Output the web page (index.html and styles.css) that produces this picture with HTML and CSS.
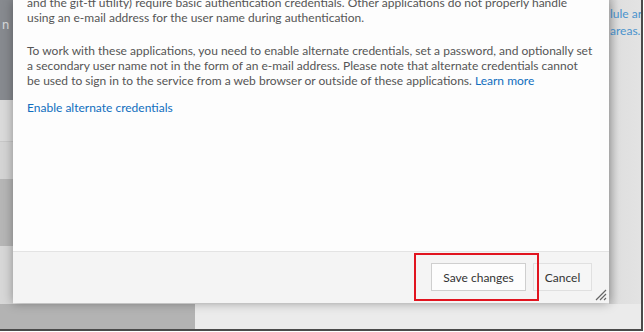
FILE: index.html
```html
<!DOCTYPE html>
<html lang="en">
<head>
    <meta charset="UTF-8">
    <title>Alternate credentials</title>
    <link rel="stylesheet" href="styles.css">
</head>
<body>
    <div class="frame">
        <div class="backdrop">
            <div class="side-left">
                <div class="seg seg-dark"><span>n</span></div>
                <div class="seg seg-light"></div>
                <div class="seg seg-light2"></div>
                <div class="seg seg-mid"></div>
                <div class="seg seg-light3"></div>
            </div>
            <div class="middle"></div>
            <div class="side-right">
                <p>lule ar</p>
                <p>areas.</p>
            </div>
        </div>
        <div class="bottom-band">
            <div class="band-dark"></div>
            <div class="band-light"></div>
        </div>

        <div class="dialog">
            <div class="dialog-body">
                <p class="first">and the git-tf utility) require basic authentication credentials. Other applications do not properly handle<br>
                using an e-mail address for the user name during authentication.</p>
                <p>To work with these applications, you need to enable alternate credentials, set a password, and optionally set<br>
                a secondary user name not in the form of an e-mail address. Please note that alternate credentials cannot<br>
                be used to sign in to the service from a web browser or outside of these applications. <a href="#">Learn more</a></p>
                <p class="enable"><a href="#">Enable alternate credentials</a></p>
            </div>
            <div class="dialog-footer">
                <button class="btn btn-primary">Save changes</button>
                <button class="btn btn-cancel">Cancel</button>
                <svg class="grip" width="12" height="12" viewBox="0 0 12 12">
                    <path d="M1 11 L11 1 M5 11 L11 5 M9 11 L11 9" stroke="#666" stroke-width="1.2" fill="none"/>
                </svg>
            </div>
        </div>

        <div class="highlight"></div>
    </div>
</body>
</html>
```

FILE: styles.css
```css
html, body {
    margin: 0;
    padding: 0;
    background: #fff;
}
body {
    font-family: Lato, 'Open Sans', sans-serif;
    width: 644px;
    height: 332px;
    overflow: hidden;
}
.frame {
    position: relative;
    width: 641px;
    height: 329px;
    border-right: 2px solid #4a4a4a;
    border-bottom: 2px solid #4a4a4a;
    overflow: hidden;
    background: #e9e9e9;
    display: flex;
    flex-direction: column;
}
.backdrop {
    display: flex;
    height: 304px;
}
.side-left {
    width: 13px;
    display: flex;
    flex-direction: column;
}
.seg {
    overflow: hidden;
}
.seg-dark {
    height: 100px;
    background: #878a8f;
    color: #d9dadc;
    font-size: 13px;
    padding: 16px 0 0 2px;
    box-sizing: border-box;
}
.seg-light {
    height: 41px;
    background: #dadada;
    border-bottom: 1px solid #c8c8c8;
}
.seg-light2 {
    height: 37px;
    background: #d4d4d4;
}
.seg-mid {
    height: 67px;
    background: #b6b6b6;
}
.seg-light3 {
    flex: 1;
    background: #d7d7d7;
}
.middle {
    flex: 1;
    background: #e9e9e9;
}
.side-right {
    width: 32px;
    background: linear-gradient(to right, #c9c9c9, #dfdfdf 30%, #e3e3e3);
    overflow: hidden;
    white-space: nowrap;
    font-size: 12px;
    color: #4a93cd;
    padding-top: 5px;
    box-sizing: border-box;
}
.side-right p {
    margin: 0 0 0 1px;
    line-height: 17px;
}
.bottom-band {
    display: flex;
    flex: 1;
}
.band-dark {
    width: 195px;
    background: #b3b3b3;
}
.band-light {
    flex: 1;
    background: #ebebeb;
}
.dialog {
    position: absolute;
    left: 13px;
    top: 0;
    width: 596px;
    height: 303px;
    background: #fdfdfd;
    box-shadow: 0 0 10px rgba(0, 0, 0, 0.35);
    display: flex;
    flex-direction: column;
}
.dialog-body {
    flex: 1;
    padding: 0 14px;
    font-size: 12px;
    line-height: 15px;
    color: #555;
    overflow: hidden;
    white-space: nowrap;
}
.dialog-body p {
    margin: 0 0 18px;
}
.dialog-body p.first {
    margin-top: -5px;
}
.dialog-body p.enable {
    margin-top: -6px;
}
.dialog-body a {
    color: #106ebe;
    text-decoration: none;
}
.dialog-footer {
    position: relative;
    height: 52px;
    background: #f4f4f4;
    border-top: 1px solid #e3e3e3;
    display: flex;
    justify-content: flex-end;
    align-items: flex-start;
    gap: 7px;
    padding: 11px 17px 0 0;
    box-sizing: border-box;
}
.btn {
    font-family: Lato, 'Open Sans', sans-serif;
    font-size: 12px;
    height: 28px;
    padding: 0;
    color: #333;
    cursor: pointer;
}
.btn-primary {
    width: 95px;
    background: #fdfdfd;
    border: 1px solid #cfcfcf;
}
.btn-cancel {
    width: 59px;
    background: #f6f6f6;
    border: 1px solid #e0e0e0;
}
.grip {
    position: absolute;
    right: 2px;
    bottom: 2px;
}
.highlight {
    position: absolute;
    left: 414px;
    top: 253px;
    width: 121px;
    height: 44px;
    border: 2px solid #e1141f;
}
```
